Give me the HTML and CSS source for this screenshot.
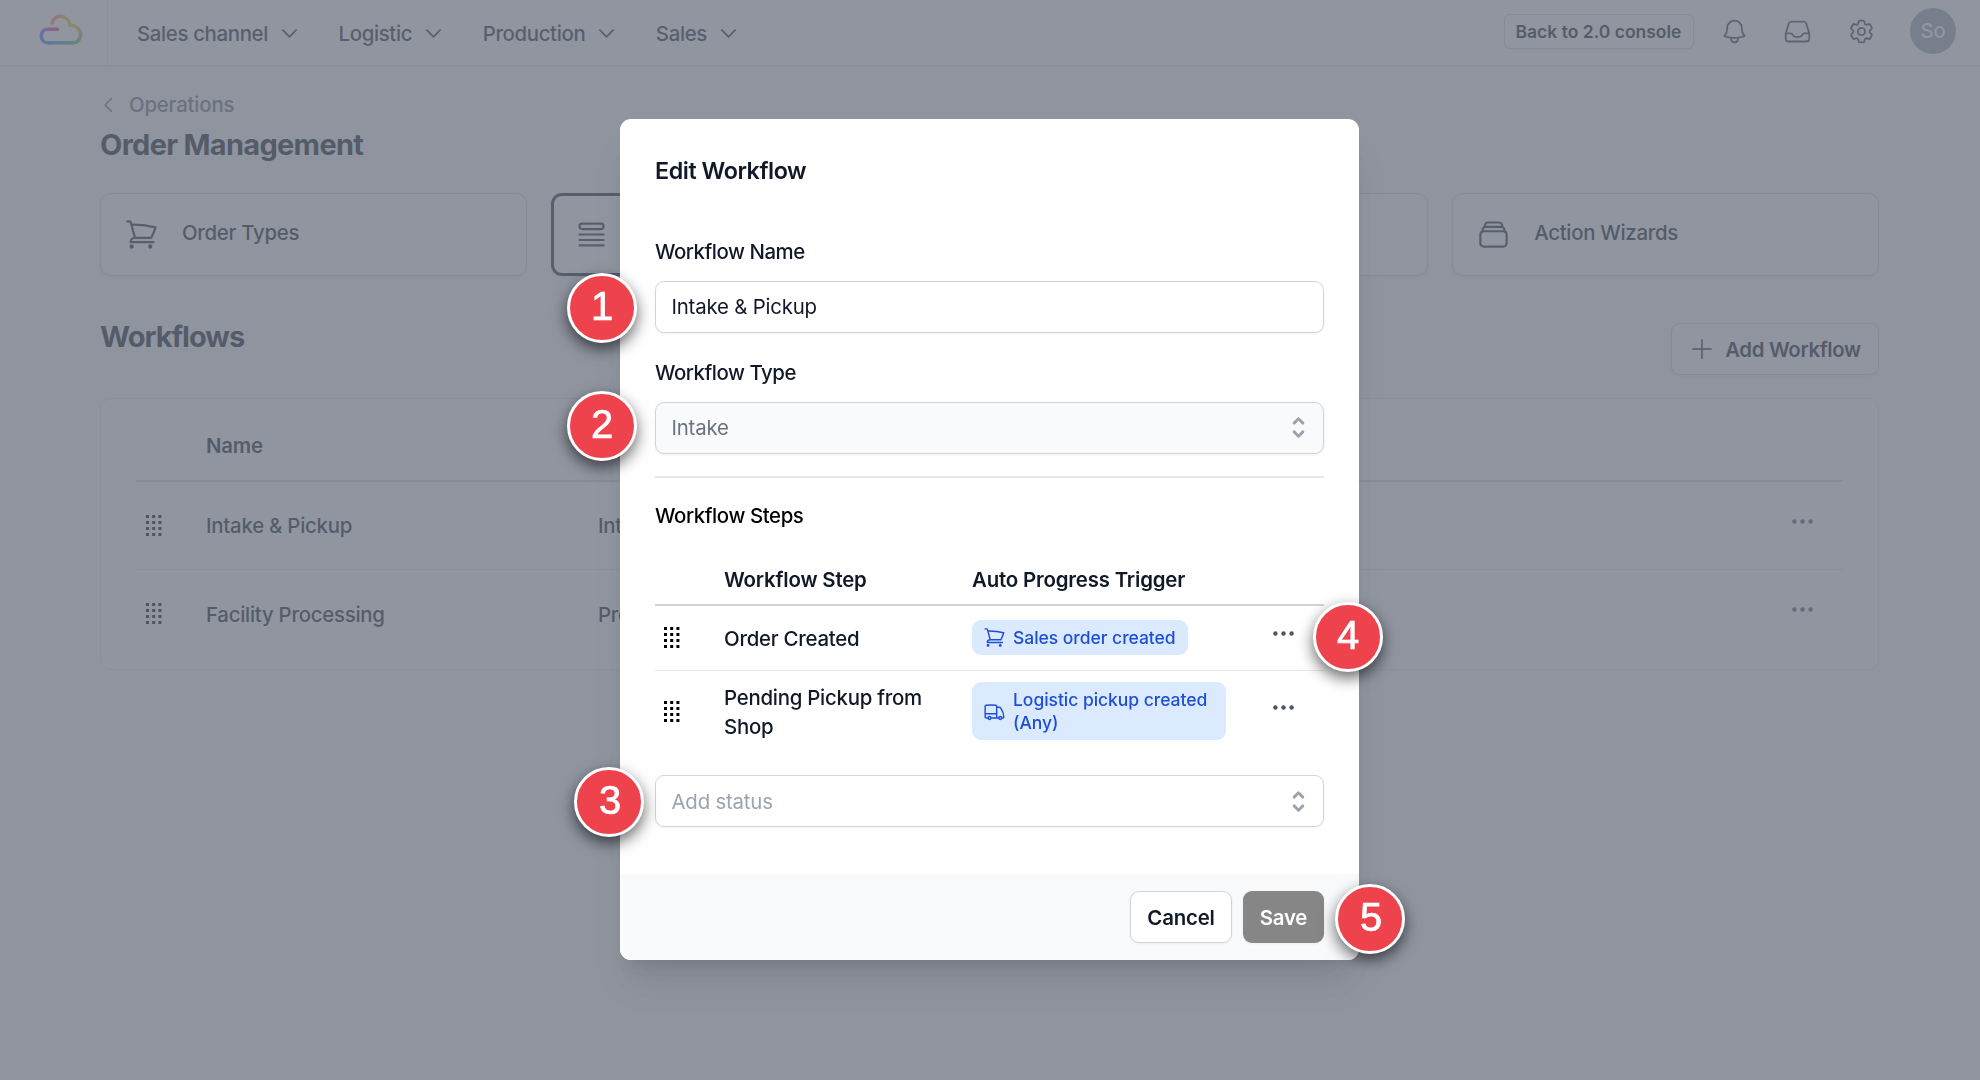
FILE: index.html
```html
<!DOCTYPE html>
<html lang="en">
<head>
    <meta charset="UTF-8">
    <meta name="viewport" content="width=device-width, initial-scale=1.0">
    <title>Order Management</title>
    <link rel="stylesheet" href="styles.css">
</head>
<body>

<!-- icons shared by the page and the modal -->
<svg class="sprite" xmlns="http://www.w3.org/2000/svg">
    <symbol id="chevron-down" viewBox="0 0 24 24"><path d="M19.5 8.25l-7.5 7.5-7.5-7.5"/></symbol>
    <symbol id="cart" viewBox="0 0 24 24"><path d="M2.25 3h1.386c.51 0 .955.343 1.087.835l.383 1.437M7.5 14.25a3 3 0 00-3 3h15.75m-12.75-3h11.218c1.121-2.3 2.1-4.684 2.924-7.138a60.114 60.114 0 00-16.536-1.84M7.5 14.25L5.106 5.272M6 20.25a.75.75 0 11-1.5 0 .75.75 0 011.5 0zm12.75 0a.75.75 0 11-1.5 0 .75.75 0 011.5 0z"/></symbol>
    <symbol id="truck" viewBox="0 0 24 24"><path d="M8.25 18.75a1.5 1.5 0 01-3 0m3 0a1.5 1.5 0 00-3 0m3 0h6m-9 0H3.375a1.125 1.125 0 01-1.125-1.125V14.25m17.25 4.5a1.5 1.5 0 01-3 0m3 0a1.5 1.5 0 00-3 0m3 0h1.125c.621 0 1.129-.504 1.09-1.124a17.902 17.902 0 00-3.213-9.193 2.056 2.056 0 00-1.58-.86H14.25M16.5 18.75h-2.25m0-11.177v-.958c0-.568-.422-1.048-.987-1.106a48.554 48.554 0 00-10.026 0 1.106 1.106 0 00-.987 1.106v7.635m12-6.677v6.677m0 4.5v-4.5m0 0h-12"/></symbol>
    <symbol id="dots" viewBox="0 0 21 5"><circle cx="2.4" cy="2.5" r="2.2"/><circle cx="10.5" cy="2.5" r="2.2"/><circle cx="18.6" cy="2.5" r="2.2"/></symbol>
    <symbol id="handle" viewBox="0 0 16 22"><path d="M0 0h3v3H0zM6.2 0h3v3h-3zM12.4 0h3v3h-3zM0 6h3v3H0zM6.2 6h3v3h-3zM12.4 6h3v3h-3zM0 12h3v3H0zM6.2 12h3v3h-3zM12.4 12h3v3h-3zM0 18h3v3H0zM6.2 18h3v3h-3zM12.4 18h3v3h-3z"/></symbol>
    <symbol id="selector" viewBox="0 0 20 20"><path d="M10 3a1 1 0 01.707.293l3 3a1 1 0 01-1.414 1.414L10 5.414 7.707 7.707a1 1 0 01-1.414-1.414l3-3A1 1 0 0110 3zm-3.707 9.293a1 1 0 011.414 0L10 14.586l2.293-2.293a1 1 0 011.414 1.414l-3 3a1 1 0 01-1.414 0l-3-3a1 1 0 010-1.414z"/></symbol>
</svg>

<header class="topbar">
    <div class="logo">
        <svg width="44" height="32" viewBox="0 0 44 32">
            <defs>
                <linearGradient id="g1" x1="12" y1="0" x2="31" y2="0" gradientUnits="userSpaceOnUse"><stop offset="0" stop-color="#ff8a5c"/><stop offset="1" stop-color="#f0c330"/></linearGradient>
                <linearGradient id="g2" x1="0" y1="12" x2="0" y2="29" gradientUnits="userSpaceOnUse"><stop offset="0" stop-color="#e8cf2e"/><stop offset="1" stop-color="#4cc26a"/></linearGradient>
                <linearGradient id="g3" x1="6" y1="0" x2="36" y2="0" gradientUnits="userSpaceOnUse"><stop offset="0" stop-color="#3b8ef0"/><stop offset="1" stop-color="#4cc26a"/></linearGradient>
                <linearGradient id="g4" x1="19" y1="15" x2="5" y2="28" gradientUnits="userSpaceOnUse"><stop offset="0" stop-color="#f43f74"/><stop offset=".5" stop-color="#b35be0"/><stop offset="1" stop-color="#3b8ef0"/></linearGradient>
            </defs>
            <path stroke="url(#g1)" d="M13 9C14.5 4.5 18 2.3 21.5 2.3C26 2.3 30 5.5 31 11"/>
            <path stroke="url(#g2)" d="M31 11C37.5 11.5 41.5 15.5 41.5 20.5C41.5 25.5 38.5 28.8 34 28.8"/>
            <path stroke="url(#g3)" d="M34 28.8L9 28.85"/>
            <path stroke="url(#g4)" d="M9 28.8C4.5 28.8 2.3 26 2.3 22C2.3 18 5 15.2 9 15.2L18.5 15.2"/>
        </svg>
    </div>
    <nav class="nav">
        <a>Sales channel <svg class="chev"><use href="#chevron-down"/></svg></a>
        <a>Logistic <svg class="chev"><use href="#chevron-down"/></svg></a>
        <a>Production <svg class="chev"><use href="#chevron-down"/></svg></a>
        <a>Sales <svg class="chev"><use href="#chevron-down"/></svg></a>
    </nav>
    <div class="tools">
        <button class="btn-small">Back to 2.0 console</button>
        <svg class="tool" viewBox="0 0 24 24"><path d="M14.857 17.082a23.848 23.848 0 005.454-1.31A8.967 8.967 0 0118 9.75v-.7V9A6 6 0 006 9v.75a8.967 8.967 0 01-2.312 6.022c1.733.64 3.56 1.085 5.455 1.31m5.714 0a24.255 24.255 0 01-5.714 0m5.714 0a3 3 0 11-5.714 0"/></svg>
        <svg class="tool" viewBox="0 0 24 24"><path d="M2.25 13.5h3.86a2.25 2.25 0 012.012 1.244l.256.512a2.25 2.25 0 002.013 1.244h3.218a2.25 2.25 0 002.013-1.244l.256-.512a2.25 2.25 0 012.013-1.244h3.859m-19.5.338V18a2.25 2.25 0 002.25 2.25h15A2.25 2.25 0 0021.75 18v-4.162c0-.224-.034-.447-.1-.661L19.24 5.338a2.25 2.25 0 00-2.15-1.588H6.911a2.25 2.25 0 00-2.15 1.588L2.35 13.177a2.25 2.25 0 00-.1.661z"/></svg>
        <svg class="tool" viewBox="0 0 24 24"><path d="M9.594 3.94c.09-.542.56-.94 1.11-.94h2.593c.55 0 1.02.398 1.11.94l.213 1.281c.063.374.313.686.645.87.074.04.147.083.22.127.324.196.72.257 1.075.124l1.217-.456a1.125 1.125 0 011.37.49l1.296 2.247a1.125 1.125 0 01-.26 1.431l-1.003.827c-.293.24-.438.613-.431.992a6.759 6.759 0 010 .255c-.007.378.138.75.43.99l1.005.828c.424.35.534.954.26 1.43l-1.298 2.247a1.125 1.125 0 01-1.369.491l-1.217-.456c-.355-.133-.75-.072-1.076.124a6.57 6.57 0 01-.22.128c-.331.183-.581.495-.644.869l-.213 1.28c-.09.543-.56.941-1.11.941h-2.594c-.55 0-1.02-.398-1.11-.94l-.213-1.281c-.062-.374-.312-.686-.644-.87a6.52 6.52 0 01-.22-.127c-.325-.196-.72-.257-1.076-.124l-1.217.456a1.125 1.125 0 01-1.369-.49l-1.297-2.247a1.125 1.125 0 01.26-1.431l1.004-.827c.292-.24.437-.613.43-.992a6.932 6.932 0 010-.255c.007-.378-.138-.75-.43-.99l-1.004-.828a1.125 1.125 0 01-.26-1.43l1.297-2.247a1.125 1.125 0 011.37-.491l1.216.456c.356.133.751.072 1.076-.124.072-.044.146-.087.22-.128.332-.183.582-.495.644-.869l.214-1.281z"/><path d="M15 12a3 3 0 11-6 0 3 3 0 016 0z"/></svg>
        <div class="avatar">So</div>
    </div>
</header>

<main class="page">
    <a class="back"><svg width="10" height="16" viewBox="0 0 10 16"><path d="M8.5 1.5L2 8l6.5 6.5"/></svg>Operations</a>
    <h1>Order Management</h1>

    <div class="cards">
        <div class="card"><svg class="card-icon"><use href="#cart"/></svg><span>Order Types</span></div>
        <div class="card active"><svg class="card-icon" viewBox="0 0 24 24"><path d="M3.75 12h16.5m-16.5 3.75h16.5M3.75 19.5h16.5M5.625 4.5h12.75a1.875 1.875 0 010 3.75H5.625a1.875 1.875 0 010-3.75z"/></svg></div>
        <div class="card"></div>
        <div class="card"><svg class="card-icon" viewBox="0 0 24 24"><path d="M6 6.878V6a2.25 2.25 0 012.25-2.25h7.5A2.25 2.25 0 0118 6v.878m-12 0c.235-.083.487-.128.75-.128h10.5c.263 0 .515.045.75.128m-12 0A2.25 2.25 0 004.5 9v.878m13.5-3A2.25 2.25 0 0119.5 9v.878m0 0a2.246 2.246 0 00-.75-.128H5.25c-.263 0-.515.045-.75.128m15 0A2.25 2.25 0 0121 12v6a2.25 2.25 0 01-2.25 2.25H5.25A2.25 2.25 0 013 18v-6c0-.98.626-1.813 1.5-2.122"/></svg><span>Action Wizards</span></div>
    </div>

    <div class="section-head">
        <h2>Workflows</h2>
        <button class="btn"><svg width="20" height="20" viewBox="0 0 20 20"><path d="M10 .8v18.4M.8 10h18.4"/></svg><span>Add Workflow</span></button>
    </div>

    <div class="panel">
        <table class="list">
            <thead>
                <tr><th class="c-handle"></th><th class="c-name">Name</th><th></th><th class="c-menu"></th></tr>
            </thead>
            <tbody>
                <tr><td><svg class="handle"><use href="#handle"/></svg></td><td>Intake &amp; Pickup</td><td>Int</td><td><svg class="dots"><use href="#dots"/></svg></td></tr>
                <tr><td><svg class="handle"><use href="#handle"/></svg></td><td>Facility Processing</td><td>Pro</td><td><svg class="dots"><use href="#dots"/></svg></td></tr>
            </tbody>
        </table>
    </div>
</main>

<div class="overlay">
    <div class="modal">
        <div class="modal-body">
            <h3>Edit Workflow</h3>

            <label>Workflow Name</label>
            <div class="field"><span>Intake &amp; Pickup</span></div>

            <label>Workflow Type</label>
            <div class="field disabled"><span>Intake</span><svg class="selector"><use href="#selector"/></svg></div>

            <hr>

            <label class="steps-label">Workflow Steps</label>
            <table class="steps">
                <thead>
                    <tr><th class="s-handle"></th><th class="s-name">Workflow Step</th><th class="s-trigger">Auto Progress Trigger</th><th></th></tr>
                </thead>
                <tbody>
                    <tr class="row-one">
                        <td><svg class="handle"><use href="#handle"/></svg></td>
                        <td>Order Created</td>
                        <td><span class="badge"><svg><use href="#cart"/></svg><span>Sales order created</span></span></td>
                        <td><svg class="dots"><use href="#dots"/></svg></td>
                    </tr>
                    <tr class="row-two">
                        <td><svg class="handle"><use href="#handle"/></svg></td>
                        <td>Pending Pickup from<br>Shop</td>
                        <td><span class="badge wide"><svg><use href="#truck"/></svg><span>Logistic pickup created<br>(Any)</span></span></td>
                        <td><svg class="dots"><use href="#dots"/></svg></td>
                    </tr>
                </tbody>
            </table>

            <div class="field placeholder"><span>Add status</span><svg class="selector"><use href="#selector"/></svg></div>
        </div>
        <div class="modal-foot">
            <button class="btn cancel"><span>Cancel</span></button>
            <button class="btn save"><span>Save</span></button>
        </div>

        <div class="marker m1">1</div>
        <div class="marker m2">2</div>
        <div class="marker m3">3</div>
        <div class="marker m4">4</div>
        <div class="marker m5">5</div>
    </div>
</div>

</body>
</html>
```
FILE: styles.css
```css
* {
    box-sizing: border-box;
}
body {
    margin: 0;
    height: 1080px;
    overflow: hidden;
    background: #f9fafb;
    color: #111827;
    font-family: Inter, "Liberation Sans", sans-serif;
    font-size: 20.4px;
    line-height: 29px;
    letter-spacing: -.25px;
}
svg {
    display: block;
    flex: none;
    fill: none;
    stroke: currentColor;
    stroke-width: 1.5;
    stroke-linecap: round;
    stroke-linejoin: round;
}
.sprite {
    position: absolute;
    width: 0;
    height: 0;
}
h1, h2, h3 {
    margin: 0;
}
button {
    font-family: inherit;
    color: inherit;
}

/* top bar */
.topbar {
    display: flex;
    align-items: center;
    height: 67px;
    background: #fff;
    border-bottom: 2px solid #e5e7eb;
}
.logo {
    width: 108px;
    height: 65px;
    padding: 14px 0 0 39px;
    border-right: 1px solid #e5e7eb;
}
.logo svg {
    stroke-width: 3.6;
}
.nav {
    display: flex;
    gap: 38.5px;
    padding: 1px 0 0 29px;
    font-weight: 500;
    letter-spacing: -.35px;
    color: #1f2937;
}
.nav a {
    display: flex;
    align-items: center;
    gap: 11px;
}
.chev {
    width: 21px;
    height: 21px;
    stroke-width: 2;
}
.tools {
    display: flex;
    align-items: center;
    margin-left: auto;
    padding: 0 24px 3px 0;
}
.btn-small {
    width: 190px;
    height: 35px;
    margin-right: 26px;
    padding: 0;
    border: 1.5px solid #d1d5db;
    border-radius: 6px;
    background: #fff;
    font-size: 17.5px;
    font-weight: 600;
    box-shadow: 0 1px 2px rgba(0, 0, 0, .06);
}
.tool {
    width: 29px;
    height: 29px;
    margin-right: 34.5px;
    color: #374151;
}
.avatar {
    width: 46px;
    height: 46px;
    border-radius: 50%;
    background: #9ca3af;
    color: #fff;
    font-weight: 500;
    line-height: 46px;
    text-align: center;
}

/* page */
.page {
    padding: 23px 101px 0 100px;
}
.back {
    display: flex;
    align-items: center;
    gap: 16px;
    padding-left: 3px;
    color: #6b7280;
    font-weight: 500;
    letter-spacing: -.2px;
}
h1, h2 {
    font-size: 29px;
    font-weight: 700;
    line-height: 40px;
    letter-spacing: -.7px;
}
h1 {
    margin-top: 6px;
}
h2 {
    letter-spacing: -1px;
}
.cards {
    display: grid;
    grid-template-columns: repeat(4, 1fr);
    gap: 24px;
    margin-top: 28px;
}
.card {
    display: flex;
    align-items: center;
    gap: 23px;
    height: 83px;
    padding: 0 23px;
    border: 1.5px solid #d1d5db;
    border-radius: 11px;
    background: #fff;
    font-weight: 500;
    letter-spacing: -.3px;
    box-shadow: 0 1px 3px rgba(0, 0, 0, .06);
}
.card span {
    padding-bottom: 4px;
}
.card.active {
    padding: 0 20px;
    border: 3px solid #1f2937;
}
.card-icon {
    width: 35px;
    height: 35px;
    color: #1f2937;
}
.section-head {
    display: flex;
    justify-content: space-between;
    margin-top: 41px;
}
.btn {
    display: flex;
    align-items: center;
    justify-content: center;
    height: 52px;
    padding: 0 16px;
    border: 1.5px solid #d1d5db;
    border-radius: 9px;
    background: #fff;
    font-size: 20.4px;
    font-weight: 600;
    letter-spacing: -.2px;
    box-shadow: 0 1px 3px rgba(0, 0, 0, .06);
}
.section-head .btn {
    width: 208px;
    gap: 13px;
    margin-top: 6px;
    padding: 0 13px 0 16px;
    letter-spacing: -.35px;
}
.panel {
    height: 272px;
    margin-top: 23px;
    padding: 0 35px;
    border: 1.5px solid #e5e7eb;
    border-radius: 11px;
    background: #fff;
}
table {
    width: 100%;
    border-collapse: collapse;
    table-layout: fixed;
    text-align: left;
}
th, td {
    padding: 0;
    font-weight: 500;
}
th {
    font-weight: 600;
    letter-spacing: -.17px;
}
.list th {
    height: 82px;
    padding-top: 11px;
    border-bottom: 2px solid #d1d5db;
}
.list td {
    height: 88.5px;
    border-bottom: 1.5px solid #e5e7eb;
}
.list tr:last-child td {
    border-bottom: 0;
}
.c-handle { width: 70px; }
.c-name { width: 392px; }
.c-menu { width: 51px; }
.handle {
    width: 16px;
    height: 22px;
    margin-left: 10px;
    fill: #000;
    stroke: none;
}
.steps .handle {
    margin-left: 9px;
}
.dots {
    width: 21px;
    height: 5px;
    fill: #4b5563;
    stroke: none;
}
.list .dots {
    margin-top: -7px;
}

/* modal */
.overlay {
    position: fixed;
    inset: 0;
    padding-top: 119px;
    background: rgba(107, 114, 128, .75);
}
.modal {
    position: relative;
    width: 739px;
    height: 841px;
    margin-left: 620px;
    border-radius: 11px;
    background: #fff;
    box-shadow: 0 29px 36px -7px rgba(0, 0, 0, .1), 0 12px 15px -9px rgba(0, 0, 0, .1);
}
.modal-body {
    height: 755px;
    padding: 34px 35px 0;
}
h3 {
    margin-bottom: 49px;
    font-size: 23.3px;
    font-weight: 600;
    line-height: 35px;
    letter-spacing: -.45px;
}
label {
    display: block;
    font-weight: 500;
    letter-spacing: -.45px;
}
.field {
    display: flex;
    align-items: center;
    justify-content: space-between;
    height: 52px;
    margin: 14.5px 0 25.5px;
    padding: 0 10px 0 15.5px;
    border: 1.5px solid #d1d5db;
    border-radius: 9px;
    letter-spacing: -.2px;
    box-shadow: 0 1px 3px rgba(0, 0, 0, .06);
}
.field.disabled {
    margin-bottom: 0;
    background: #f9fafb;
    color: #6b7280;
}
.field.placeholder {
    margin: 21.5px 0 0;
    color: #9ca3af;
}
.selector {
    width: 29px;
    height: 29px;
    fill: #9ca3af;
    stroke: none;
}
hr {
    height: 1.5px;
    margin: 22.5px 0 23.5px;
    border: 0;
    background: #e5e7eb;
}
.steps-label {
    color: #000;
    letter-spacing: -.4px;
}
.steps th {
    height: 75px;
    padding-top: 24px;
    border-bottom: 2px solid #d1d5db;
}
.s-handle { width: 69px; }
.s-name { width: 248px; }
.s-trigger { width: 301px; }
.row-one td {
    height: 65.5px;
    border-bottom: 1.5px solid #e5e7eb;
}
.row-two td {
    height: 83px;
}
.steps .dots {
    margin-top: -7px;
}
.badge {
    display: inline-flex;
    align-items: center;
    gap: 7px;
    margin-bottom: 2px;
    padding: 6px 12px 6px 11px;
    border-radius: 9px;
    background: #dbeafe;
    color: #1d4ed8;
    font-size: 17.5px;
    line-height: 23px;
    letter-spacing: -.04px;
    white-space: nowrap;
    vertical-align: middle;
}
.badge.wide {
    width: 254px;
}
.badge svg {
    width: 23px;
    height: 23px;
}
.modal-foot {
    display: flex;
    justify-content: flex-end;
    gap: 11px;
    height: 86px;
    padding: 17px 35px 0;
    border-radius: 0 0 11px 11px;
    background: #f9fafb;
}
.cancel {
    width: 102px;
}
.save {
    width: 81px;
    border: 0;
    background: #868686;
    color: #fff;
}

/* numbered callouts pinned over the modal */
.marker {
    position: absolute;
    width: 70px;
    height: 70px;
    border: 3px solid #fff;
    border-radius: 50%;
    background: #ee424d;
    color: #fff;
    font: 40px/61px "Liberation Sans", Arial, sans-serif;
    letter-spacing: 0;
    text-align: center;
    -webkit-text-stroke: .7px #fff;
    box-shadow: 0 6px 15px rgba(0, 0, 0, .6);
}
.m1 { left: -53px; top: 154px; }
.m2 { left: -53px; top: 272px; }
.m3 { left: -46px; top: 648px; padding-left: 2px; }
.m4 { left: 693px; top: 483px; }
.m5 { left: 715px; top: 765px; padding-left: 2px; }
```
